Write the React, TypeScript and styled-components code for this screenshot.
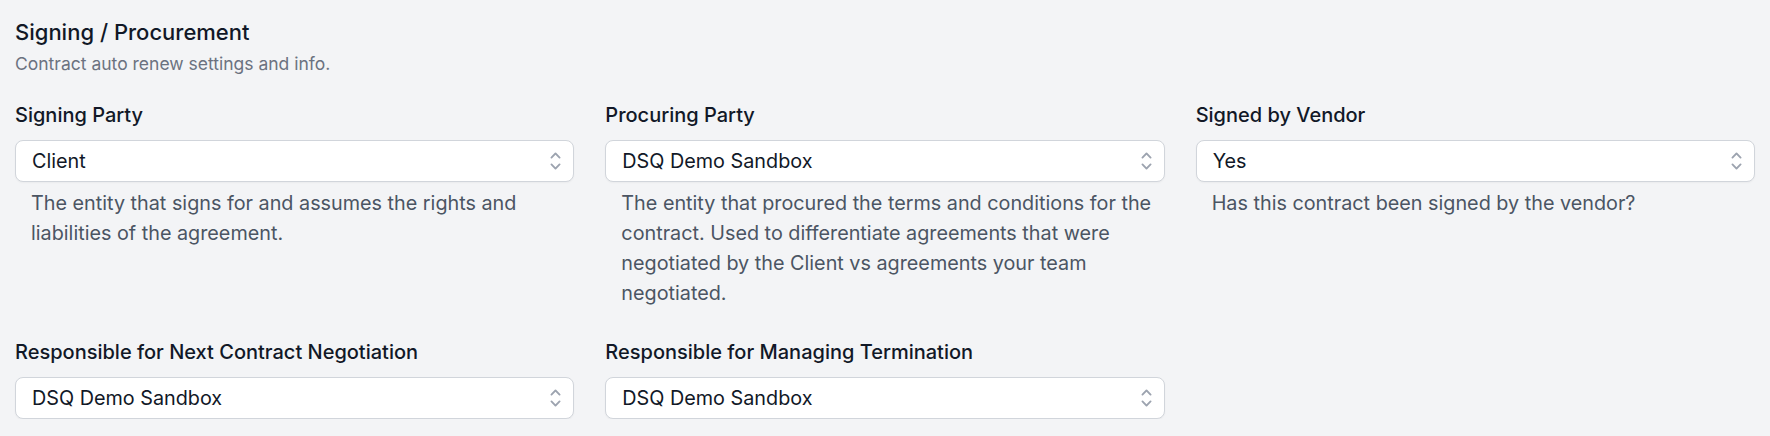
import styled, { createGlobalStyle } from "styled-components";

const GlobalStyle = createGlobalStyle`
  html, body {
    margin: 0;
    padding: 0;
    background: #f3f4f6;
    font-family: Inter, "Noto Sans", sans-serif;
    -webkit-font-smoothing: antialiased;
  }
  * {
    box-sizing: border-box;
  }
`;

type Field = {
  label: string;
  value: string;
  help?: string;
};

const fields: Field[] = [
  {
    label: "Signing Party",
    value: "Client",
    help: "The entity that signs for and assumes the rights and liabilities of the agreement.",
  },
  {
    label: "Procuring Party",
    value: "DSQ Demo Sandbox",
    help: "The entity that procured the terms and conditions for the contract. Used to differentiate agreements that were negotiated by the Client vs agreements your team negotiated.",
  },
  {
    label: "Signed by Vendor",
    value: "Yes",
    help: "Has this contract been signed by the vendor?",
  },
  {
    label: "Responsible for Next Contract Negotiation",
    value: "DSQ Demo Sandbox",
  },
  {
    label: "Responsible for Managing Termination",
    value: "DSQ Demo Sandbox",
  },
];

const StyledSection = styled.section`
  padding: 17px 15px 0 15px;
  width: 100%;
`;

const Header = styled.header`
  display: flex;
  flex-direction: column;
  gap: 5px;
  margin-bottom: 25px;
`;

const Title = styled.h2`
  margin: 0;
  font-size: 22px;
  line-height: 30px;
  font-weight: 500;
  color: #111827;
`;

const Subtitle = styled.p`
  margin: 0;
  font-size: 17.5px;
  line-height: 24px;
  color: #6b7280;
`;

const Grid = styled.div`
  display: grid;
  grid-template-columns: repeat(3, 1fr);
  column-gap: 31px;
  row-gap: 30px;
  width: 1740px;
`;

const FieldBox = styled.div`
  display: flex;
  flex-direction: column;
`;

const Label = styled.label`
  font-size: 20px;
  line-height: 28px;
  font-weight: 500;
  color: #111827;
  margin-bottom: 11px;
`;

const SelectBox = styled.div`
  position: relative;
  display: flex;
  align-items: center;
  height: 42px;
  padding: 0 40px 0 16px;
  background: #ffffff;
  border: 1px solid #d1d5db;
  border-radius: 8px;
  box-shadow: 0 1px 2px rgba(0, 0, 0, 0.04);
  font-size: 19.8px;
  color: #111827;
`;

const Chevron = styled.svg`
  position: absolute;
  right: 5px;
  top: 50%;
  transform: translateY(-50%);
  width: 25px;
  height: 25px;
  fill: #9ca3af;
`;

const Help = styled.p`
  margin: 6px 0 0 0;
  padding-left: 16px;
  font-size: 19.8px;
  line-height: 30px;
  color: #4b5563;
`;

const ChevronUpDown = () => (
  <Chevron viewBox="0 0 20 20" aria-hidden="true">
    <path
      fillRule="evenodd"
      d="M10.53 3.47a.75.75 0 0 0-1.06 0L6.22 6.72a.75.75 0 0 0 1.06 1.06L10 5.06l2.72 2.72a.75.75 0 1 0 1.06-1.06l-3.25-3.25Zm-4.31 9.81 3.25 3.25a.75.75 0 0 0 1.06 0l3.25-3.25a.75.75 0 1 0-1.06-1.06L10 14.94l-2.72-2.72a.75.75 0 0 0-1.06 1.06Z"
      clipRule="evenodd"
    />
  </Chevron>
);

const App = () => {
  return (
    <>
      <GlobalStyle />
      <StyledSection>
        <Header>
          <Title>Signing / Procurement</Title>
          <Subtitle>Contract auto renew settings and info.</Subtitle>
        </Header>
        <Grid>
          {fields.map((f) => (
            <FieldBox key={f.label}>
              <Label>{f.label}</Label>
              <SelectBox>
                {f.value}
                <ChevronUpDown />
              </SelectBox>
              {f.help && <Help>{f.help}</Help>}
            </FieldBox>
          ))}
        </Grid>
      </StyledSection>
    </>
  );
};

export default App;
